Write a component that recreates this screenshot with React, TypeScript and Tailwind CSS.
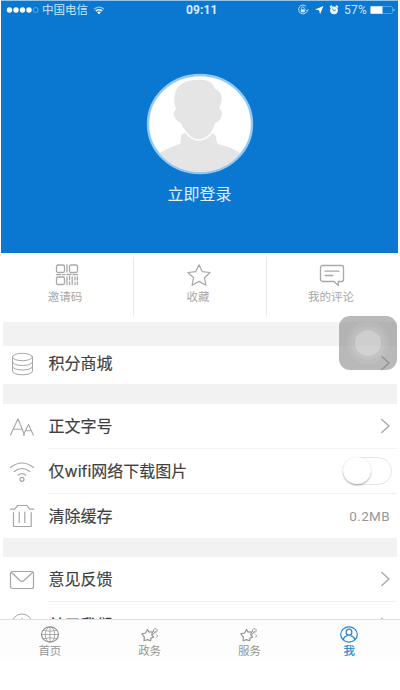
import type { ReactNode } from 'react';

const stroke = {
  fill: 'none',
  stroke: 'currentColor',
  strokeWidth: 1,
  strokeLinecap: 'round' as const,
  strokeLinejoin: 'round' as const,
};

function StatusBar() {
  return (
    <div className="flex h-[18px] items-center text-[11.5px] leading-[18px] text-[#cfe6f9]">
      <div className="flex w-[132px] items-center pl-[5px]">
        <svg width="34" height="8" viewBox="0 0 34 8">
          {[3.5, 10, 16.5, 23].map((x) => (
            <circle key={x} cx={x} cy="4" r="2.7" fill="#fff" />
          ))}
          <circle cx="29.7" cy="4" r="2.5" fill="none" stroke="#6fb2e8" strokeWidth="0.8" />
        </svg>
        <span className="ml-[2px] whitespace-nowrap">中国电信</span>
        <svg className="ml-[5px]" width="12" height="9" viewBox="0 0 12 9" fill="none" stroke="#e8f4ff">
          <path d="M1 3.2Q6-.8 11 3.2" strokeWidth="1.3" opacity=".6" />
          <path d="M2.8 5Q6 2.5 9.2 5" strokeWidth="1.6" />
          <path d="M4.2 6.2Q6 5 7.8 6.2L6 8.3Z" fill="#fff" stroke="none" />
        </svg>
      </div>
      <span className="ml-[53px] w-[33px] font-[Roboto] text-[12px] font-bold tracking-[0.1px] text-[#dceefd]">09:11</span>
      <svg className="ml-[78px]" width="42" height="12" viewBox="0 0 42 12">
        <g fill="none" stroke="#c5e1f7">
          <path d="M9 2.2A4.4 4.4 0 1 0 9.8 7.8" />
          <path d="m8.4 5.3 1.7 2.3 1.2-2.5" strokeWidth=".8" />
          <path d="M4.4 5.5V4.3a1.4 1.4 0 0 1 2.8 0v1.2" strokeWidth=".8" />
        </g>
        <path d="M3.8 5.3h4v3h-4z" fill="#d6eafa" />
        <path d="m26.5 2-3.4 8-1.1-3.8L18 5.5Z" fill="#fff" />
        <circle cx="37" cy="6.3" r="3.9" fill="#eff8ff" />
        <path d="m33 3.4 2-1.8M41 3.4l-2-1.8" stroke="#eff8ff" strokeWidth="1.5" />
        <path d="m35.2 4.8 1.9 1.8 1.5-.7" fill="none" stroke="#0b78d0" strokeWidth="1" />
      </svg>
      <span className="ml-[5px] w-[25px] font-[Roboto] text-[12px] tracking-[0.2px]">57%</span>
      <svg className="ml-[1px]" width="26" height="10" viewBox="0 0 26 10">
        <rect x=".9" y="1.5" width="21.5" height="7" rx="1" fill="none" stroke="#64ace7" strokeWidth=".8" />
        <path d="M.5 1.3h12v7.4H.5z" fill="#fff" />
        <path d="M23.5 3.5v3l1.3-1.5Z" fill="#c5e1f7" />
      </svg>
    </div>
  );
}

function Avatar() {
  return (
    <svg width="108" height="102" viewBox="0 0 108 102">
      <defs>
        <clipPath id="avatar">
          <ellipse cx="54" cy="51" rx="51" ry="48" />
        </clipPath>
      </defs>
      <ellipse cx="54" cy="51" rx="52" ry="49" fill="#fff" stroke="#93c9f2" strokeWidth="2.4" />
      <g clipPath="url(#avatar)" fill="#e5e5e5">
        <path d="M4 98C6 82 16 77 34 71Q35 69 35 62L40 59H65L70 63Q70 69 72 71C88 75 100 80 106 98V105H4Z" />
        <path d="M52 7C62 6 67 10 69 16C75 18 77 24 75 30L73 36Q76 36 76 41Q75 49 69 50C67 59 63 63 58 65Q52 68 47 65C41 62 37 56 35 50C30 48 27 43 28 39L30 36C27 28 28 18 33 13Q40 6 52 7Z" />
        <path d="M37 55C40 61 43 64 48 66Q53 68 58 66C63 64 66 61 68 55" fill="none" stroke="#fff" strokeWidth="1.6" />
      </g>
    </svg>
  );
}

function Action({ label, size, children }: { label: string; size: string; children: ReactNode }) {
  return (
    <div className={`flex flex-col items-center text-[#a8a8a8] ${size}`}>
      <div className="flex h-[24px] items-center">{children}</div>
      <span className="mt-[2px] text-[11.5px] leading-[16px]">{label}</span>
    </div>
  );
}

function Chevron() {
  return (
    <svg width="11" height="16" viewBox="0 0 11 16" {...stroke} strokeWidth={1.4} className="text-[#a9a9a9]">
      <path d="m1.8 1.5 7.2 6.5-7.2 6.5" />
    </svg>
  );
}

function Row({ icon, label, right, size, line }: { icon: ReactNode; label: string; right?: ReactNode; size: string; line?: boolean }) {
  return (
    <div className={`mr-[3px] flex shrink-0 bg-white pl-[9px] ${size}`}>
      <div className="flex w-[26px] shrink-0 items-center justify-center text-[#a6a6a6]">{icon}</div>
      <div className={`ml-[13px] flex flex-1 items-center justify-between border-b pr-[6px] ${line ? 'border-[#f2f2f2]' : 'border-transparent'}`}>
        <span className="ml-[0.6px] whitespace-nowrap text-[16px] leading-[22px] text-[#404040] [-webkit-text-stroke:0.15px_#404040]">{label}</span>
        {right}
      </div>
    </div>
  );
}

function Tab({ label, active, children }: { label: string; active?: boolean; children: ReactNode }) {
  return (
    <div className={`flex flex-1 flex-col items-center pt-[6px] ${active ? 'text-[#2586ce]' : 'text-[#969696]'}`}>
      {children}
      <span className={`text-[11.5px] leading-[16px] ${active ? '[-webkit-text-stroke:0.2px_#2586ce]' : ''}`}>{label}</span>
    </div>
  );
}

function StarBadge() {
  return (
    <svg width="20" height="18" viewBox="0 0 20 18" {...stroke}>
      <path d="m7.3 3.7 1.8 2.8 3.7-.4-1 3.2 2.2 2.4-3 1.2-.3 2.7-3.5-1.1-3.5 1.1.3-3.7L1.3 8.4l4.1-1Z" strokeWidth="1.3" />
      <path d="M12.6 9.5 16 5.5M13.8 6V4q.7-1.6 2.7-1.2 2 1 .8 3l-1.8 1.8M17 9.2q2.4 1.4.3 2.7" strokeWidth="1" />
    </svg>
  );
}

function Gap({ size }: { size: string }) {
  return <div className={`ml-[3px] mr-[3px] shrink-0 bg-[#f2f2f2] ${size}`} />;
}

export default function App() {
  return (
    <div className="relative h-[690px] w-[400px] overflow-hidden bg-white font-['Inter','Noto_Sans_CJK_SC',sans-serif]">
      <div className="flex h-[619px] flex-col overflow-hidden">
        <header className="ml-px flex h-[253px] w-[397px] shrink-0 flex-col border-t border-[#8fc4ee] bg-[#0a78d0]">
          <StatusBar />
          <div className="mt-[54px] flex flex-col items-center">
            <Avatar />
            <span className="mt-[7px] text-[16px] leading-[24px] text-[#e1f0fc]">立即登录</span>
          </div>
        </header>

        <div className="flex h-[69px] shrink-0 items-start pt-[10px]">
          <Action label="邀请码" size="w-[133px] pr-[3px]">
            <svg className="ml-[3px]" width="24" height="22" viewBox="0 0 24 22" {...stroke} strokeWidth={1.3}>
              <rect x="1.5" y="1" width="8" height="7.5" rx="1.5" />
              <rect x="14.5" y="1" width="8" height="7.5" rx="1.5" />
              <rect x="1.5" y="13" width="8" height="7.5" rx="1.5" />
              <path d="M12 1v7M1.5 10.7h4M7.5 10.7h2.5M12 10.5h4M18 10.7h4.5M12 13v7.5M14.6 12.5v3M14.6 18v2.5M17.2 13v7.5M20 13v3M20 18.5v2M22.4 13v3M22.4 18v2.5" />
            </svg>
          </Action>
          <div className="-mt-[6px] h-[59px] w-px bg-[#eaeaea]" />
          <Action label="收藏" size="w-[132px] pr-[4px]">
            <svg className="ml-[2px]" width="26" height="24" viewBox="0 0 26 24" {...stroke} strokeWidth={1.2}>
              <path d="m13 1.7 3.3 7 7.8.8-5.7 5.2 1.5 7.5-6.9-3.8-6.9 3.8 1.5-7.5L1.9 9.5l7.8-.8Z" />
            </svg>
          </Action>
          <div className="-mt-[6px] h-[59px] w-px bg-[#eaeaea]" />
          <Action label="我的评论" size="w-[133px] pr-[5px]">
            <svg className="ml-[2px]" width="26" height="23" viewBox="0 0 26 23" {...stroke} strokeWidth={1.3}>
              <path d="M3.5 1.5h19a2 2 0 0 1 2 2v12a2 2 0 0 1-2 2h-3.2V21.5L15 17.5H3.5a2 2 0 0 1-2-2v-12a2 2 0 0 1 2-2ZM6 7.2h14M6 11.5h8" />
            </svg>
          </Action>
        </div>

        <Gap size="h-[24px]" />
        <Row
          size="h-[38px] pb-[3px]"
          label="积分商城"
          right={<Chevron />}
          icon={
            <svg width="24" height="24" viewBox="0 0 24 24" {...stroke}>
              <ellipse cx="12.5" cy="5" rx="10" ry="3.7" />
              <path d="M2.5 5v14c0 5 20 5 20 0V5M2.5 10c0 4.8 20 4.8 20 0M2.5 14.5c0 4.8 20 4.8 20 0" />
            </svg>
          }
        />
        <Gap size="h-[20px]" />
        <Row
          size="h-[45px]"
          line
          label="正文字号"
          right={<Chevron />}
          icon={
            <svg width="26" height="20" viewBox="0 0 26 20" {...stroke} strokeWidth={1.1}>
              <path d="M1.5 18 9 1.8 15.5 18M4.3 12.2h8.8M14.3 18l5.2-10.5L24.3 18M16.5 13.7h5.8" />
            </svg>
          }
        />
        <Row
          size="h-[45px]"
          line
          label="仅wifi网络下载图片"
          right={
            <div className="-mr-[1px] h-[28px] w-[49px] rounded-full border-[1.5px] border-[#e6e6e6]">
              <div className="-ml-px -mt-px h-[27px] w-[28px] rounded-full bg-white shadow-[0_1.5px_2px_rgba(0,0,0,0.25),0_0_1px_rgba(0,0,0,0.12)]" />
            </div>
          }
          icon={
            <svg width="26" height="22" viewBox="0 0 26 22" {...stroke} strokeWidth={1.2}>
              <path d="M1.5 6.5Q13-2.5 24.5 6.5M5.2 10.5Q13 4.5 20.8 10.5M9.2 14.2Q13 11 16.8 14.2" />
              <circle cx="13" cy="18.3" r="2" />
            </svg>
          }
        />
        <Row
          size="h-[44px]"
          label="清除缓存"
          right={<span className="mr-[1px] mt-[2px] font-[Roboto] text-[13.5px] tracking-[0.35px] text-[#979797]">0.2MB</span>}
          icon={
            <svg width="26" height="24" viewBox="0 0 26 24" {...stroke} strokeWidth={1.2}>
              <path d="M1.5 5.2h4.2L8.7 1.5h9.2l2.7 3.7h4M4.5 8.5v14h17.7v-14M10.2 8v10.5M15.8 8v10.5" />
            </svg>
          }
        />
        <Gap size="h-[19px]" />
        <Row
          size="h-[45px]"
          line
          label="意见反馈"
          right={<Chevron />}
          icon={
            <svg width="26" height="20" viewBox="0 0 26 20" {...stroke} strokeWidth={1.2}>
              <rect x="1.5" y="1.5" width="23" height="17" rx="2" />
              <path d="m2.5 2.5 8.8 8.2q1.7 1.4 3.4 0l8.8-8.2" />
            </svg>
          }
        />
        <Row
          size="h-[46px]"
          label="关于我们"
          right={<Chevron />}
          icon={
            <svg width="24" height="24" viewBox="0 0 24 24" {...stroke}>
              <circle cx="12" cy="11.5" r="10.5" />
              <path d="M12 5v1M12 9v8" />
            </svg>
          }
        />
      </div>

      <nav className="flex h-[40px] border-t border-[#dfdfdf] bg-[#fdfdfd] pr-px">
        <Tab label="首页">
          <svg width="20" height="18" viewBox="0 0 20 18" {...stroke}>
            <ellipse cx="10" cy="9" rx="9" ry="8" strokeWidth="1.3" />
            <ellipse cx="10" cy="9" rx="5" ry="8" strokeWidth=".8" />
            <path d="M10 1v16M1 9h18M3 4.5q7 2.3 14 0M3 13.5q7-2.3 14 0" strokeWidth=".8" />
          </svg>
        </Tab>
        <Tab label="政务">
          <StarBadge />
        </Tab>
        <Tab label="服务">
          <StarBadge />
        </Tab>
        <Tab label="我" active>
          <svg width="20" height="18" viewBox="0 0 20 18" {...stroke} strokeWidth={1.3}>
            <ellipse cx="10" cy="9" rx="8.8" ry="8" />
            <ellipse cx="10" cy="6.5" rx="3" ry="3.2" />
            <path d="M4 14.5Q4.5 11 8 10.3M16 14.5Q15.5 11 12 10.3" />
          </svg>
        </Tab>
      </nav>

      <div className="absolute left-[339px] top-[315.5px] flex h-[54.5px] w-[58px] items-center justify-center rounded-[11px] bg-[#808080]/55">
        <div className="flex h-[42px] w-[42px] items-center justify-center rounded-full bg-white/8">
          <div className="flex h-[34px] w-[34px] items-center justify-center rounded-full bg-white/8">
            <div className="h-[26px] w-[26px] rounded-full bg-white/25" />
          </div>
        </div>
      </div>
    </div>
  );
}
